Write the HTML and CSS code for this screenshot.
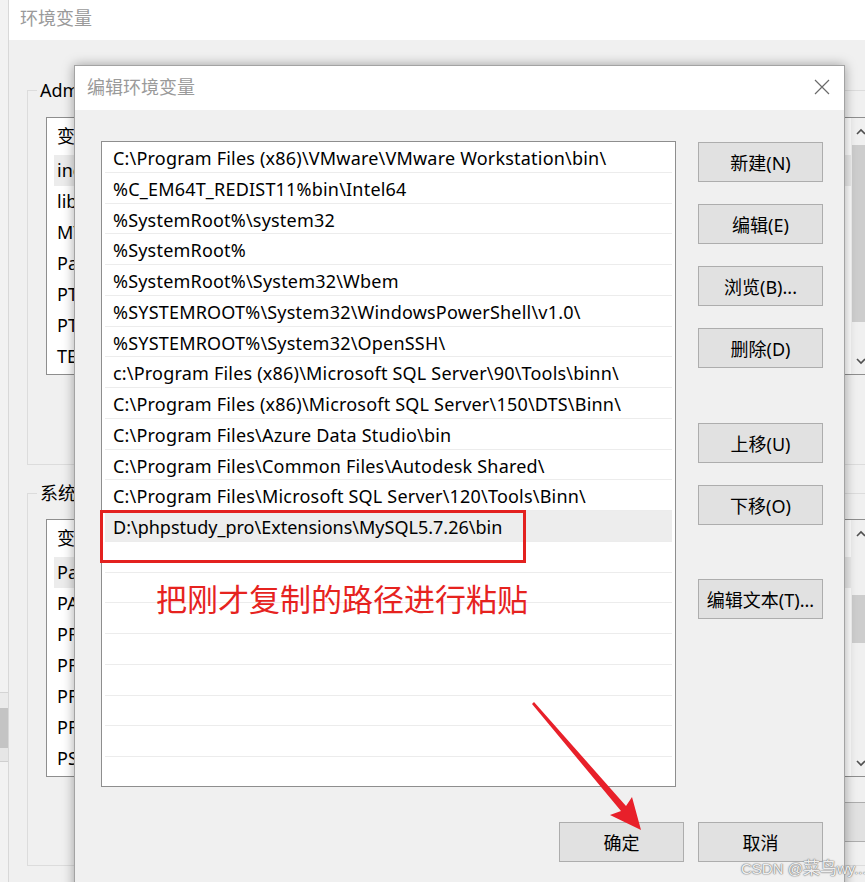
FILE: index.html
```html
<!DOCTYPE html>
<html lang="zh-CN">
<head>
<meta charset="utf-8">
<title>编辑环境变量</title>
<link rel="stylesheet" href="styles.css">
</head>
<body>
<div class="screen">
  <div class="behind">
    <div class="behind-top"></div>
    <div class="behind-gap"></div>
    <div class="behind-bar"></div>
    <div class="behind-gap2"></div>
    <div class="behind-rest"></div>
  </div>
  <div class="envwin">
    <div class="env-title">环境变量</div>
    <div class="env-body">
      <fieldset class="group group-user">
        <legend>Administrator 的用户变量(U)</legend>
        <div class="vlist">
          <div class="vlist-main">
            <div class="vhead">变量</div>
            <div class="vrow sel">include</div>
            <div class="vrow">lib</div>
            <div class="vrow">MYSQL_HOME</div>
            <div class="vrow">Path</div>
            <div class="vrow">PTSMINSTALLPATH</div>
            <div class="vrow">PTSM_HOME</div>
            <div class="vrow">TEMP</div>
          </div>
          <div class="vscroll">
            <div class="sb-btn"><svg width="10" height="8" viewBox="0 0 10 8"><polyline points="1,6 5,2 9,6" fill="none" stroke="#505050" stroke-width="1.6"/></svg></div>
            <div class="sb-thumb thumb-user"></div>
            <div class="sb-space"></div>
            <div class="sb-btn"><svg width="10" height="8" viewBox="0 0 10 8"><polyline points="1,2 5,6 9,2" fill="none" stroke="#505050" stroke-width="1.6"/></svg></div>
          </div>
        </div>
      </fieldset>
      <fieldset class="group group-sys">
        <legend>系统变量(S)</legend>
        <div class="vlist">
          <div class="vlist-main">
            <div class="vhead">变量</div>
            <div class="vrow sel">Path</div>
            <div class="vrow">PATHEXT</div>
            <div class="vrow">PROCESSOR_ARCHITECTURE</div>
            <div class="vrow">PROCESSOR_IDENTIFIER</div>
            <div class="vrow">PROCESSOR_LEVEL</div>
            <div class="vrow">PROCESSOR_REVISION</div>
            <div class="vrow">PSModulePath</div>
          </div>
          <div class="vscroll">
            <div class="sb-btn"><svg width="10" height="8" viewBox="0 0 10 8"><polyline points="1,6 5,2 9,6" fill="none" stroke="#505050" stroke-width="1.6"/></svg></div>
            <div class="sb-lead"></div>
            <div class="sb-thumb thumb-sys"></div>
            <div class="sb-space"></div>
            <div class="sb-btn"><svg width="10" height="8" viewBox="0 0 10 8"><polyline points="1,2 5,6 9,2" fill="none" stroke="#505050" stroke-width="1.6"/></svg></div>
          </div>
        </div>
        <div class="sys-btns"><div class="bg-btn">新建(W)...</div></div>
      </fieldset>
    </div>
  </div>
</div>

<div class="dialog">
  <div class="dlg-title">
    <span class="dlg-title-text">编辑环境变量</span>
    <svg class="close" width="16" height="16" viewBox="0 0 16 16"><path d="M1 1 L15 15 M15 1 L1 15" stroke="#6a6a6a" stroke-width="1.2" fill="none"/></svg>
  </div>
  <div class="dlg-body">
    <div class="dlg-main">
      <div class="plist">
        <div class="prow">C:\Program Files (x86)\VMware\VMware Workstation\bin\</div>
        <div class="prow">%C_EM64T_REDIST11%bin\Intel64</div>
        <div class="prow">%SystemRoot%\system32</div>
        <div class="prow">%SystemRoot%</div>
        <div class="prow">%SystemRoot%\System32\Wbem</div>
        <div class="prow">%SYSTEMROOT%\System32\WindowsPowerShell\v1.0\</div>
        <div class="prow">%SYSTEMROOT%\System32\OpenSSH\</div>
        <div class="prow">c:\Program Files (x86)\Microsoft SQL Server\90\Tools\binn\</div>
        <div class="prow">C:\Program Files (x86)\Microsoft SQL Server\150\DTS\Binn\</div>
        <div class="prow">C:\Program Files\Azure Data Studio\bin</div>
        <div class="prow">C:\Program Files\Common Files\Autodesk Shared\</div>
        <div class="prow">C:\Program Files\Microsoft SQL Server\120\Tools\Binn\</div>
        <div class="prow sel">D:\phpstudy_pro\Extensions\MySQL5.7.26\bin</div>
        <div class="prow"></div>
        <div class="prow"></div>
        <div class="prow"></div>
        <div class="prow"></div>
        <div class="prow"></div>
        <div class="prow"></div>
        <div class="prow"></div>
        <div class="prow"></div>
      </div>
      <div class="btncol">
        <div class="btn">新建(N)</div>
        <div class="btn">编辑(E)</div>
        <div class="btn">浏览(B)...</div>
        <div class="btn">删除(D)</div>
        <div class="btn btn-move">上移(U)</div>
        <div class="btn">下移(O)</div>
        <div class="btn btn-text">编辑文本(T)...</div>
      </div>
    </div>
    <div class="dlg-foot">
      <div class="btn btn-wide">确定</div>
      <div class="btn btn-wide">取消</div>
    </div>
  </div>
</div>

<div class="annot-box"></div>
<div class="annot-text">把刚才复制的路径进行粘贴</div>
<svg class="annot-arrow" width="865" height="882" viewBox="0 0 865 882">
  <polygon points="532,704 621,811 610,815 641,830 632,797 626,806 534,702" fill="#e8202a"/>
</svg>
<div class="watermark">CSDN @<span class="wm-cjk">菜鸟</span>wy...</div>
</body>
</html>
```
FILE: styles.css
```css
* { box-sizing: border-box; }
html, body { margin: 0; padding: 0; }
body {
  width: 865px;
  height: 882px;
  overflow: hidden;
  position: relative;
  background: #f0f0f0;
  font-family: "Noto Sans", "Noto Sans CJK SC", sans-serif;
  font-size: 18px;
  color: #000;
}
.screen { display: flex; width: 865px; height: 882px; overflow: hidden; }

.behind { width: 8px; flex: none; display: flex; flex-direction: column; background: #f2f2f2; }
.behind-top { height: 693px; border-bottom: 1px solid #d4d4d4; }
.behind-gap { height: 15px; background: #ebebeb; }
.behind-bar { height: 40px; background: #c4c4c4; }
.behind-gap2 { height: 14px; background: #e6e6e6; border-bottom: 1px solid #cfcfcf; }
.behind-rest { flex: 1; }

.envwin { flex: none; width: 920px; border-left: 1px solid #d8d8d8; background: #f0f0f0; }
.env-title {
  height: 40px; background: #fff; color: #9a9a9a;
  padding-left: 11px; line-height: 34px;
  font-family: "Noto Sans CJK SC", sans-serif;
}
.env-body { padding-top: 38px; padding-left: 18px; }
.group {
  margin: 0; border: 1px solid #dcdcdc;
  padding: 15px 20px 89px 18px; width: max-content;
}
.group legend { padding: 0 3px; margin-left: -9px; line-height: 24px; background: #f0f0f0; }
.group-sys { margin-top: 16px; padding: 14px 20px 23px 18px; }

.vlist { width: 826px; height: 258px; border: 1px solid #8e8e8e; background: #fff; display: flex; }
.vlist-main { flex: 1; padding-left: 7px; overflow: hidden; }
.vhead { height: 37px; line-height: 37px; padding-left: 3px; }
.vrow { height: 31px; line-height: 31px; padding-left: 3px; white-space: nowrap; }
.vrow.sel { background: #ececec; }

.vscroll { width: 20px; flex: none; display: flex; flex-direction: column; background: #f0f0f0; }
.sb-btn { height: 27px; flex: none; display: flex; align-items: center; justify-content: center; }
.sb-thumb { background: #cdcdcd; margin: 0 1px; flex: none; }
.thumb-user { height: 177px; }
.sb-lead { height: 48px; flex: none; }
.thumb-sys { height: 48px; }
.sb-space { flex: 1; }

.sys-btns { display: flex; justify-content: flex-end; margin-top: 25px; }
.bg-btn { width: 150px; height: 40px; border: 1px solid #adadad; background: #e1e1e1; }

.dialog {
  position: absolute; left: 74px; top: 65px;
  width: 771px; height: 830px;
  border: 1px solid #a3a3a3; background: #f0f0f0;
  box-shadow: 0 0 11px rgba(0, 0, 0, 0.35);
  display: flex; flex-direction: column;
}
.dlg-title {
  height: 44px; flex: none; background: #fff;
  display: flex; align-items: center; justify-content: space-between;
  padding: 0 14px 2px 12px; color: #9a9a9a;
  font-family: "Noto Sans CJK SC", sans-serif;
}
.dlg-title-text { margin-top: -2px; }
.close { display: block; }
.dlg-body { padding: 31px 21px 0 26px; }
.dlg-main { display: flex; gap: 22px; }
.plist {
  width: 575px; height: 646px; flex: none;
  border: 1px solid #8e8e8e; background: #fff;
  padding: 0 3px; overflow: hidden;
}
.prow {
  height: 30.75px; border-bottom: 1px solid #ececec;
  padding: 3px 0 0 8px; line-height: 26px; white-space: nowrap;
  letter-spacing: 0.2px;
}
.prow.sel { background: #ededed; letter-spacing: 0; }
.btncol { width: 125px; flex: none; display: flex; flex-direction: column; gap: 22px; padding-top: 1px; }
.btn {
  height: 40px; flex: none; border: 1px solid #adadad; background: #e1e1e1;
  display: flex; align-items: center; justify-content: center;
  white-space: nowrap;
}
.btn-move { margin-top: 33px; }
.btn-text { margin-top: 32px; }
.dlg-foot { display: flex; justify-content: flex-end; gap: 14px; margin-top: 35px; }
.btn-wide { width: 125px; }

.annot-box {
  position: absolute; left: 100px; top: 510px; width: 426px; height: 53px;
  border: 3px solid #e3211f;
}
.annot-text {
  position: absolute; left: 156px; top: 582px;
  font-family: "Noto Sans CJK SC", sans-serif;
  font-size: 31px; line-height: 31px; color: #e6231f; white-space: nowrap;
}
.annot-arrow { position: absolute; left: 0; top: 0; pointer-events: none; }
.watermark {
  position: absolute; left: 741px; top: 859px;
  font-family: "Liberation Sans", "Noto Sans CJK SC", sans-serif;
  font-size: 15px; line-height: 20px; white-space: nowrap;
  color: rgba(255, 255, 255, 0.9);
  text-shadow: 0 0 1px #7a7a7a, 0 0 1px #7a7a7a, 0 0 2px #9a9a9a;
}
.wm-cjk { font-size: 17px; }
```
